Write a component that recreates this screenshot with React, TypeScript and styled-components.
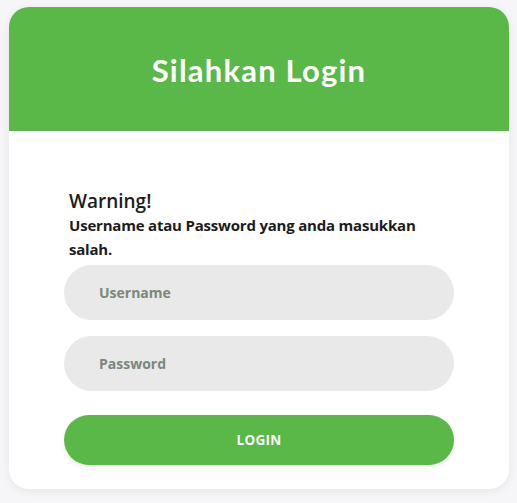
import React from "react";
import styled, { createGlobalStyle } from "styled-components";

const Global = createGlobalStyle`
  html, body { margin: 0; padding: 0; }
  body {
    background: #f6f6f8;
    font-family: "Open Sans", "Liberation Sans", sans-serif;
  }
`;

const Page = styled.div`
  width: 517px;
  height: 503px;
  padding: 7px 8px 0 9px;
  box-sizing: border-box;
`;

const Card = styled.div`
  width: 500px;
  height: 482px;
  background: #ffffff;
  border-radius: 20px;
  overflow: hidden;
  box-shadow: 0 2px 10px rgba(0, 0, 0, 0.07);
  display: flex;
  flex-direction: column;
`;

const Header = styled.div`
  height: 124px;
  background: #5ab848;
  display: flex;
  align-items: center;
  justify-content: center;
`;

const Title = styled.h1`
  margin: 0;
  color: #ffffff;
  font-family: Lato, "Open Sans", sans-serif;
  font-weight: 700;
  font-size: 31px;
  letter-spacing: 1.2px;
  padding-top: 2px;
`;

const Body = styled.form`
  padding: 58px 55px 0 55px;
  display: flex;
  flex-direction: column;
`;

const Alert = styled.div`
  padding: 0 5px;
  color: #1c1c1c;
  margin-bottom: 4px;
`;

const AlertTitle = styled.div`
  font-size: 19px;
  font-weight: 600;
  line-height: 24px;
`;

const AlertText = styled.div`
  font-size: 15px;
  font-weight: 700;
  line-height: 24px;
  letter-spacing: -0.2px;
  padding-right: 10px;
`;

const Input = styled.input`
  height: 55px;
  border: none;
  border-radius: 28px;
  background: #e9e9e9;
  padding: 0 35px;
  margin-bottom: 16px;
  font-family: "Open Sans", sans-serif;
  font-size: 14px;
  font-weight: 700;
  outline: none;
  &::placeholder {
    color: #7b877a;
  }
`;

const Button = styled.button`
  margin-top: 8px;
  height: 50px;
  border: none;
  border-radius: 25px;
  background: #5ab848;
  color: #ffffff;
  font-family: "Open Sans", sans-serif;
  font-weight: 700;
  font-size: 13.5px;
  letter-spacing: 0.3px;
  box-shadow: 0 3px 6px rgba(0, 0, 0, 0.06);
`;

export default function App() {
  return (
    <>
      <Global />
      <Page>
        <Card>
          <Header>
            <Title>Silahkan Login</Title>
          </Header>
          <Body onSubmit={(e) => e.preventDefault()}>
            <Alert>
              <AlertTitle>Warning!</AlertTitle>
              <AlertText>Username atau Password yang anda masukkan salah.</AlertText>
            </Alert>
            <Input placeholder="Username" />
            <Input type="password" placeholder="Password" />
            <Button type="submit">LOGIN</Button>
          </Body>
        </Card>
      </Page>
    </>
  );
}
